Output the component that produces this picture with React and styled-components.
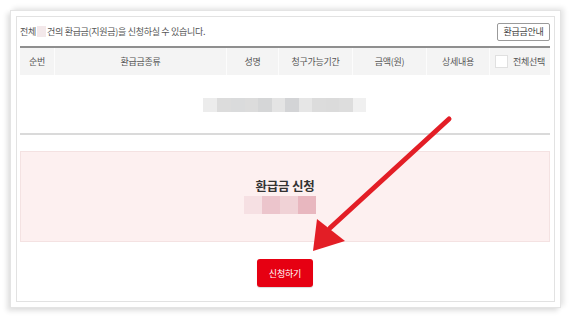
import React from 'react'
import styled, { createGlobalStyle } from 'styled-components'

const GlobalStyle = createGlobalStyle`
  body {
    margin: 0;
    background: #fff;
    font-family: "Noto Sans CJK KR", "Noto Sans", sans-serif;
  }
`

const Stage = styled.div`
  position: relative;
  width: 572px;
  height: 319px;
  padding: 10px 11px 11px 10px;
  box-sizing: border-box;
`

const Frame = styled.div`
  height: 298px;
  border: 1px solid #e4e4e4;
  background: #fff;
  padding: 5px;
  box-sizing: border-box;
  box-shadow: 3px -2px 5px rgba(0, 0, 0, 0.1), -3px 3px 5px rgba(0, 0, 0, 0.12);
`

const Inner = styled.div`
  height: 100%;
  border: 1px solid #e2e2e2;
  padding: 0 4px 0 3px;
  box-sizing: border-box;
  display: flex;
  flex-direction: column;
`

const TopBar = styled.div`
  height: 29px;
  display: flex;
  align-items: center;
  justify-content: space-between;
  font-size: 9px;
  color: #555;
  letter-spacing: -0.3px;
`

const Censor = styled.span`
  display: inline-block;
  width: 9px;
  height: 11px;
  margin: 0 1px;
  vertical-align: -2px;
  background: #f3e8ea;
`

const GuideButton = styled.button`
  height: 18px;
  width: 53px;
  padding: 0;
  border: 1px solid #9a9a9a;
  border-radius: 2px;
  background: #fff;
  font-family: inherit;
  font-size: 9px;
  color: #444;
  letter-spacing: -0.3px;
`

const Table = styled.div`
  border-top: 2px solid #8f8f8f;
`

const HeadRow = styled.div`
  display: grid;
  grid-template-columns: 34px 172px 52px 74px 74px 63px 61px;
  height: 27px;
  background: #f4f4f4;
`

const HeadCell = styled.div`
  display: flex;
  align-items: center;
  justify-content: center;
  gap: 5px;
  font-size: 9px;
  color: #555;
  letter-spacing: -0.3px;
  border-left: ${(p) => (p.first ? 'none' : '1px solid #fcfcfc')};
`

const Box = styled.span`
  width: 11px;
  height: 11px;
  background: #fff;
  border: 1px solid #e0e0e0;
`

const BodyRow = styled.div`
  height: 58px;
  display: flex;
  align-items: center;
  justify-content: center;
  border-bottom: 2px solid #dadada;
`

const Mosaic = styled.div`
  display: flex;
  padding-top: 2px;
  margin-left: ${(p) => p.shift}px;
`

const Tile = styled.span`
  width: ${(p) => p.w}px;
  height: ${(p) => p.h}px;
  background: ${(p) => p.c};
`

const Apply = styled.div`
  margin-top: 16px;
  height: 91px;
  background: #fdf0f0;
  border: 1px solid #f4e2e2;
  box-sizing: border-box;
  display: flex;
  flex-direction: column;
  align-items: center;
  justify-content: center;
  padding-bottom: 2px;
`

const ApplyTitle = styled.div`
  font-size: 12.5px;
  font-weight: 700;
  color: #333;
  letter-spacing: -0.2px;
  line-height: 16px;
`

const Footer = styled.div`
  display: flex;
  justify-content: center;
  padding-top: 17px;
`

const SubmitButton = styled.button`
  width: 56px;
  height: 28px;
  padding: 0;
  border: none;
  border-radius: 3px;
  background: #e60012;
  color: #fff;
  font-family: inherit;
  font-size: 9px;
  letter-spacing: -0.2px;
  box-shadow: 0 1px 1px rgba(0, 0, 0, 0.15);
`

const Arrow = styled.svg`
  position: absolute;
  left: 0;
  top: 0;
  pointer-events: none;
`

const grayTiles = [
  ['#ececec', 14], ['#dcdcdc', 14], ['#dadbdc', 14], ['#dcdcdc', 13], ['#d5d6d7', 14],
  ['#e4e4e4', 13], ['#d3d4d6', 14], ['#e6e6e6', 13], ['#dcdcdc', 14], ['#dbdbdb', 13],
  ['#dddddd', 14], ['#f0f0f0', 13],
]

const pinkTiles = [
  ['#f6e0e3', 18], ['#ecc5cc', 18], ['#f0d2d6', 18], ['#e8b7bf', 18],
]

const headers = ['순번', '환급금종류', '성명', '청구가능기간', '금액(원)', '상세내용']

export default function App() {
  return (
    <Stage>
      <GlobalStyle />
      <Frame>
        <Inner>
          <TopBar>
            <span>
              전체<Censor />건의 환급금(지원금)을 신청하실 수 있습니다.
            </span>
            <GuideButton>환급금안내</GuideButton>
          </TopBar>
          <Table>
            <HeadRow>
              {headers.map((h, i) => (
                <HeadCell key={h} first={i === 0}>{h}</HeadCell>
              ))}
              <HeadCell>
                <Box />
                전체선택
              </HeadCell>
            </HeadRow>
            <BodyRow>
              <Mosaic shift={-2}>
                {grayTiles.map(([c, w], i) => (
                  <Tile key={i} c={c} w={w} h={14} />
                ))}
              </Mosaic>
            </BodyRow>
          </Table>
          <Apply>
            <ApplyTitle>환급금 신청</ApplyTitle>
            <Mosaic shift={-10}>
              {pinkTiles.map(([c, w], i) => (
                <Tile key={i} c={c} w={w} h={18} />
              ))}
            </Mosaic>
          </Apply>
          <Footer>
            <SubmitButton>신청하기</SubmitButton>
          </Footer>
        </Inner>
      </Frame>
      <Arrow width="572" height="319" viewBox="0 0 572 319">
        <line x1="449" y1="119" x2="330" y2="228" stroke="#e31e26" strokeWidth="5" strokeLinecap="round" />
        <polygon points="313,251 317,219 345,241" fill="#e31e26" />
      </Arrow>
    </Stage>
  )
}
